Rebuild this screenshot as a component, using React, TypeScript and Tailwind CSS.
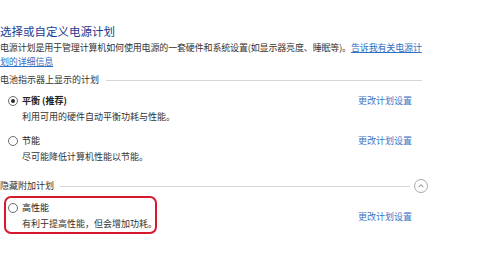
import React from "react";

function Radio({ checked }: { checked?: boolean }) {
  return (
    <span className="w-[10px] h-[10px] rounded-full border border-[#6b6b6b] bg-white flex items-center justify-center shrink-0">
      {checked ? <span className="w-[4px] h-[4px] rounded-full bg-[#2a2a2a]" /> : null}
    </span>
  );
}

function PlanRow({
  name,
  desc,
  checked,
  bold,
}: {
  name: string;
  desc: string;
  checked?: boolean;
  bold?: boolean;
}) {
  return (
    <div className="whitespace-nowrap">
      <div className="flex items-center gap-[4px] h-[14px]">
        <Radio checked={checked} />
        <span className={`text-[9px] leading-[14px] text-[#222] ${bold ? "font-bold" : ""}`}>{name}</span>
      </div>
      <div className="pl-[14px] mt-[2px] text-[9px] leading-[14px] text-[#333]">{desc}</div>
    </div>
  );
}

function ChangeLink() {
  return <span className="text-[9px] leading-[14px] text-[#3a74c4]">更改计划设置</span>;
}

export default function App() {
  return (
    <div className="w-[484px] h-[262px] bg-white overflow-hidden font-['Noto_Sans_CJK_SC','Noto_Sans',sans-serif]">
      <div className="pt-[23px] text-[11.5px] leading-[16px] text-[#1e3a8f]">选择或自定义电源计划</div>
      <div className="mt-[2px] text-[9px] leading-[14px] text-[#333] whitespace-nowrap tracking-[-0.15px]">
        电源计划是用于管理计算机如何使用电源的一套硬件和系统设置(如显示器亮度、睡眠等)。
        <span className="text-[#2f6fc4] underline">
          告诉我有关电源计
          <br />
          划的详细信息
        </span>
      </div>

      <div className="mt-[4px] flex items-center w-[422px] h-[14px]">
        <span className="text-[9px] leading-[14px] text-[#333]">电池指示器上显示的计划</span>
        <span className="flex-1 h-px bg-[#d6d6d6] ml-[7px]" />
      </div>

      <div className="mt-[7px] grid grid-cols-[358px_1fr] items-start">
        <div className="pl-[8px]">
          <PlanRow name="平衡 (推荐)" desc="利用可用的硬件自动平衡功耗与性能。" checked bold />
        </div>
        <ChangeLink />
      </div>

      <div className="mt-[10px] grid grid-cols-[358px_1fr] items-start">
        <div className="pl-[8px]">
          <PlanRow name="节能" desc="尽可能降低计算机性能以节能。" />
        </div>
        <ChangeLink />
      </div>

      <div className="mt-[15px] flex items-center w-[428px] h-[14px]">
        <span className="text-[9px] leading-[14px] text-[#333]">隐藏附加计划</span>
        <span className="flex-1 h-px bg-[#d6d6d6] ml-[6px] mr-[4px]" />
        <span className="w-[14px] h-[14px] rounded-full border border-[#a8a8a8] flex items-center justify-center">
          <svg width="8" height="8" viewBox="0 0 8 8">
            <path d="M1.5 5.2 L4 2.7 L6.5 5.2" fill="none" stroke="#777" strokeWidth="1" />
          </svg>
        </span>
      </div>

      <div className="mt-[3px] grid grid-cols-[358px_1fr] items-start">
        <div className="pl-[4px]">
          <div className="w-[153px] border-2 border-[#d8182e] rounded-[7px] pl-[2px] pt-[3px] pb-[1px]">
            <PlanRow name="高性能" desc="有利于提高性能，但会增加功耗。" />
          </div>
        </div>
        <div className="pt-[5px]">
          <ChangeLink />
        </div>
      </div>
    </div>
  );
}
